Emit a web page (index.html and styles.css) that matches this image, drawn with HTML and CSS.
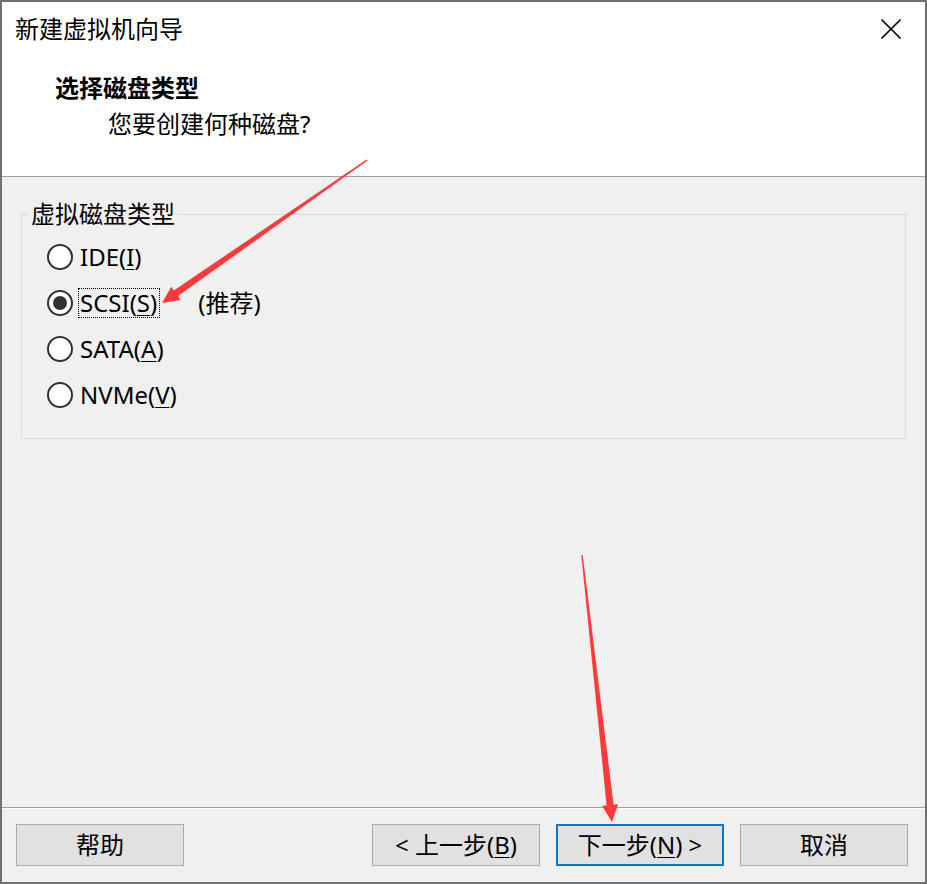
FILE: index.html
```html
<!DOCTYPE html>
<html lang="zh-CN">
<head>
<meta charset="utf-8">
<title>新建虚拟机向导</title>
<link rel="stylesheet" href="styles.css">
</head>
<body>
<div class="window">
  <div class="header">
    <div class="titlebar">
      <span class="title">新建虚拟机向导</span>
      <svg class="close" width="20" height="20" viewBox="0 0 20 20"><path d="M0.5 0.5 L19.5 19.5 M19.5 0.5 L0.5 19.5" stroke="#111" stroke-width="1.6" fill="none"/></svg>
    </div>
    <div class="heading">选择磁盘类型</div>
    <div class="subheading">您要创建何种磁盘?</div>
  </div>
  <div class="content">
    <fieldset class="group">
      <legend>虚拟磁盘类型</legend>
      <div class="radio-row"><span class="radio"></span><span class="label">IDE(<u>I</u>)</span></div>
      <div class="radio-row"><span class="radio checked"></span><span class="label focus">SCSI(<u>S</u>)</span><span class="note">(推荐)</span></div>
      <div class="radio-row"><span class="radio"></span><span class="label">SATA(<u>A</u>)</span></div>
      <div class="radio-row"><span class="radio"></span><span class="label">NVMe(<u>V</u>)</span></div>
    </fieldset>
  </div>
  <div class="footer">
    <button class="btn">帮助</button>
    <span class="spacer"></span>
    <button class="btn">&lt; 上一步(<u>B</u>)</button>
    <button class="btn default">下一步(<u>N</u>) &gt;</button>
    <button class="btn">取消</button>
  </div>
  <svg class="arrows" width="927" height="884" viewBox="0 0 927 884">
    <polygon fill="#fd3a3a" points="367.5,160.6 178,296 180.5,299.9 162,303 171.3,286.7 173.8,290.6 366.5,159.4"/>
    <polygon fill="#fd3a3a" points="581.3,555.1 606.6,805.4 602.1,806 612,822 618.1,804.2 613.6,804.7 582.7,554.9"/>
  </svg>
</div>
</body>
</html>
```
FILE: styles.css
```css
* { box-sizing: border-box; }
html, body { margin: 0; padding: 0; }
body {
  width: 927px;
  height: 884px;
  overflow: hidden;
  font-family: "Noto Sans", "Noto Sans CJK SC", sans-serif;
  font-size: 24px;
  color: #000;
  background: #fff;
}
.window {
  position: relative;
  width: 927px;
  height: 884px;
  border: 2px solid #707070;
  background: #f0f0f0;
  display: flex;
  flex-direction: column;
}
.header {
  flex: none;
  height: 175px;
  background: #fff;
  border-bottom: 1px solid #a0a0a0;
  padding-top: 15px;
}
.titlebar {
  display: flex;
  justify-content: space-between;
  align-items: center;
  height: 24px;
  padding: 0 24px 0 13px;
}
.title { line-height: 24px; }
.close { display: block; }
.heading {
  margin-top: 35px;
  padding-left: 53px;
  line-height: 24px;
  font-weight: bold;
}
.subheading {
  margin-top: 12px;
  padding-left: 106px;
  line-height: 24px;
}
.content {
  flex: 1;
  padding: 0 19px;
}
.group {
  margin: 25px 0 0 0;
  border: 1px solid #dcdcdc;
  padding: 8px 0 20px 25px;
  min-width: 0;
}
.group legend {
  margin-left: -19px;
  padding: 0 3px;
  line-height: 24px;
}
.radio-row {
  display: flex;
  align-items: center;
  height: 46px;
}
.radio {
  flex: none;
  width: 26px;
  height: 26px;
  border: 2px solid #333;
  border-radius: 50%;
  background: #fff;
  display: flex;
  align-items: center;
  justify-content: center;
}
.radio.checked::after {
  content: "";
  width: 14px;
  height: 14px;
  border-radius: 50%;
  background: #333;
}
.label {
  margin-left: 5px;
  padding: 0 2px 0 1px;
  border: 1px dotted transparent;
  line-height: 28px;
}
.label.focus { border-color: #000; }
u { text-underline-offset: 3px; text-decoration-thickness: 1px; }
.note { margin-left: 38px; line-height: 28px; }
.footer {
  flex: none;
  display: flex;
  align-items: center;
  gap: 16px;
  border-top: 1px solid #a0a0a0;
  box-shadow: inset 0 1px 0 #fff;
  padding: 16px 17px 16px 14px;
}
.spacer { flex: 1; }
.btn {
  width: 168px;
  height: 42px;
  background: #e1e1e1;
  border: 1px solid #adadad;
  font-family: "Noto Sans", "Noto Sans CJK SC", sans-serif;
  font-size: 24px;
  color: #000;
  padding: 0;
  line-height: 28px;
}
.btn.default { border: 2px solid #0078d7; }
.arrows {
  position: absolute;
  left: -2px;
  top: -2px;
  pointer-events: none;
}
```
